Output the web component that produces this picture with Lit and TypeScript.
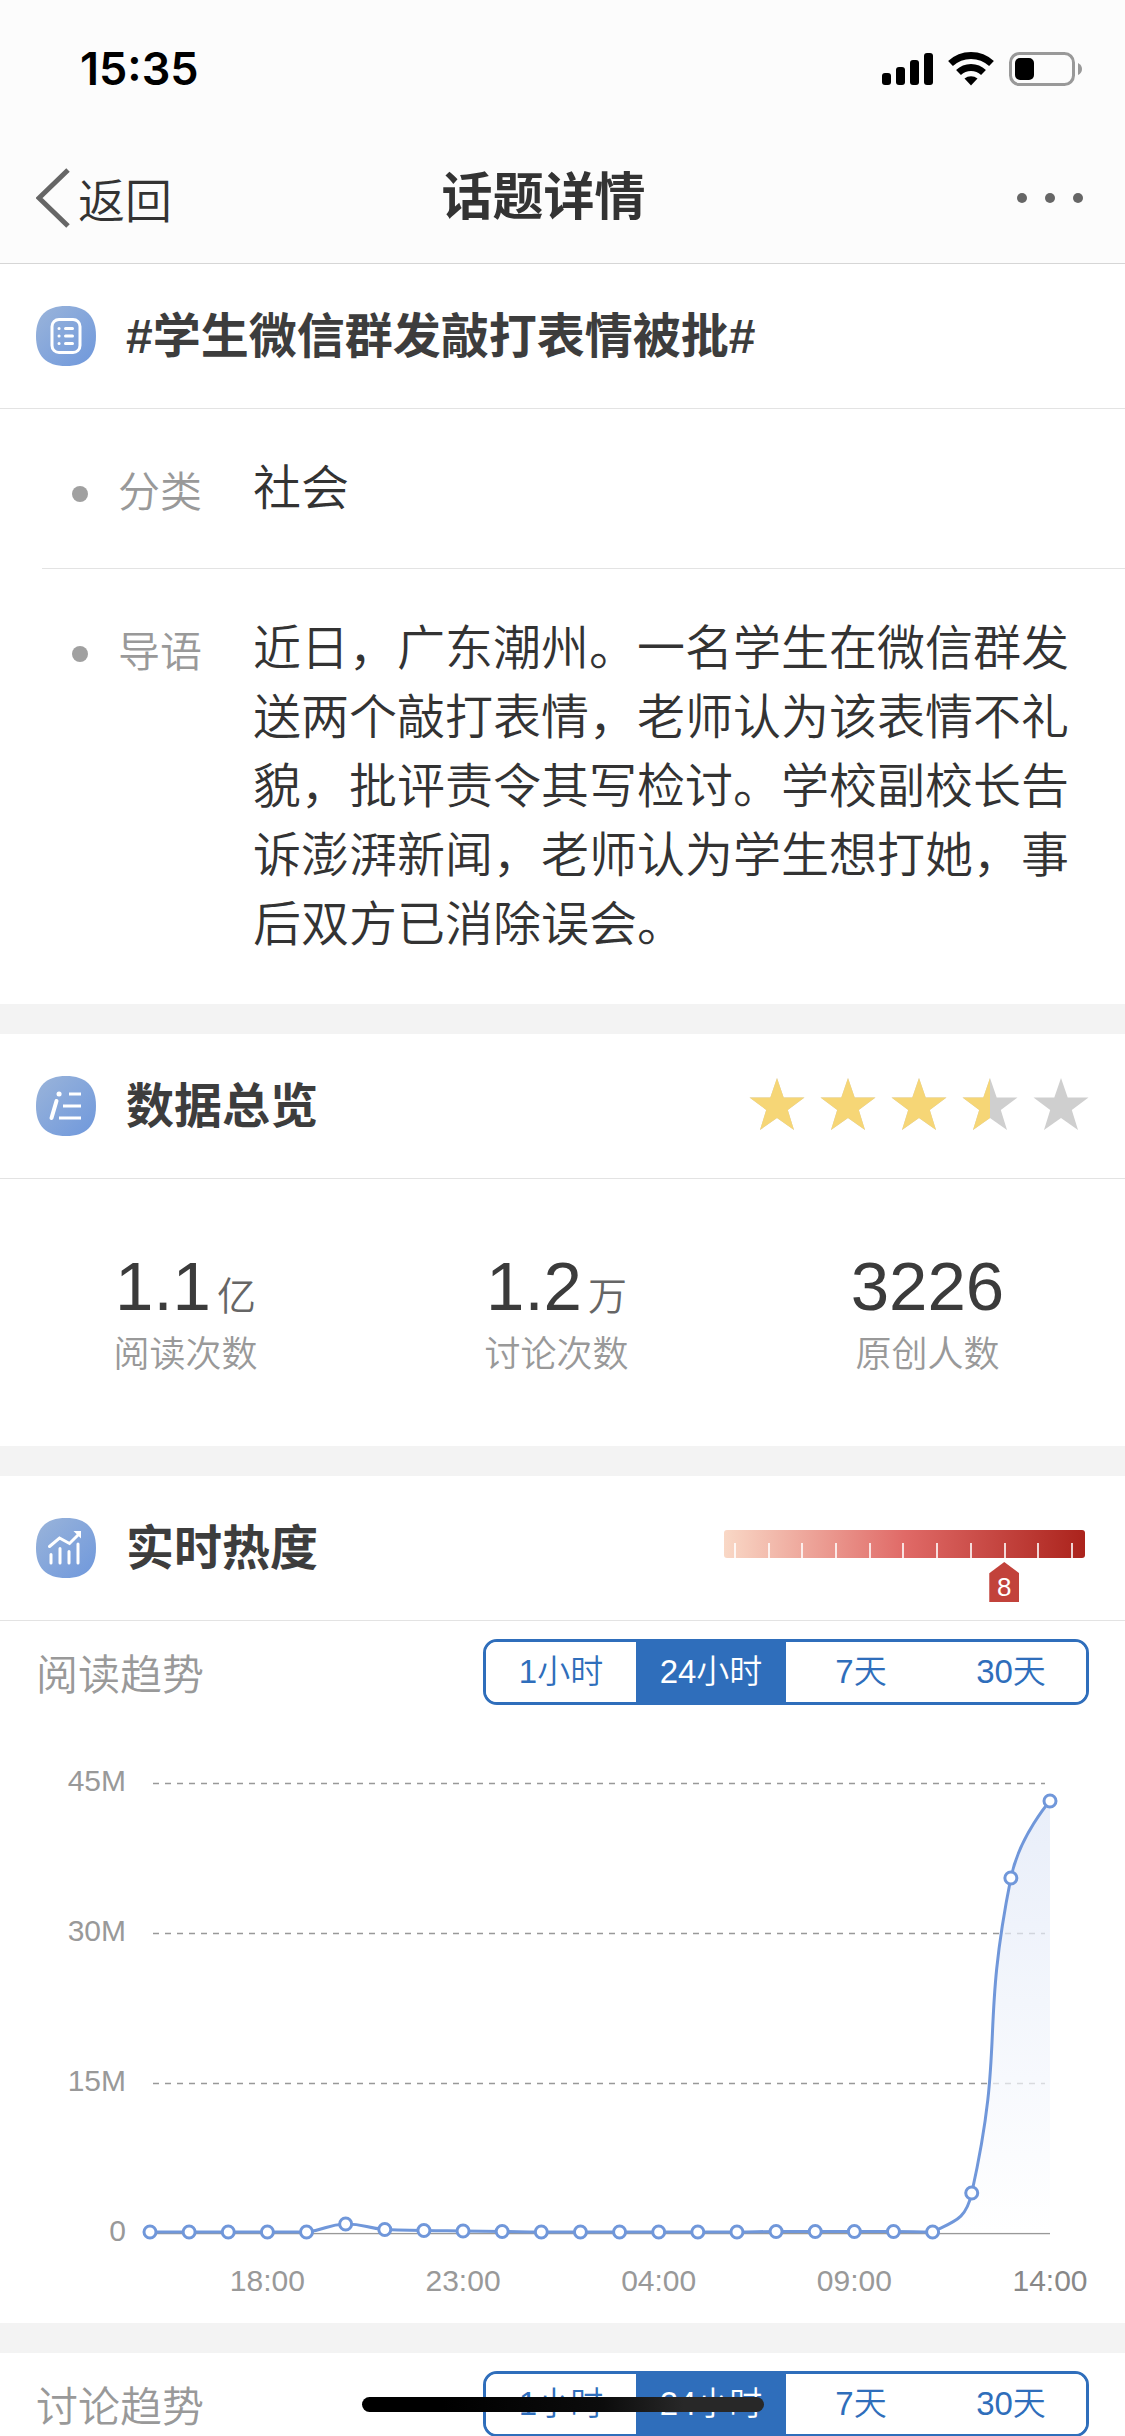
import { LitElement, html, svg, css } from "lit";
import { customElement, property, state } from "lit/decorators.js";

const FONT = css`"Liberation Sans", "Noto Sans CJK SC", sans-serif`;
const LABEL_FONT = css`"Noto Sans CJK SC", "Liberation Sans", sans-serif`;

@customElement("status-bar")
class StatusBar extends LitElement {
  static styles = css`
    :host { display: flex; align-items: center; justify-content: space-between; height: 132px; padding: 6px 43px 0 80px; box-sizing: border-box; }
    .time { font: 600 45px/52px Inter, sans-serif; color: #000; }
    .icons { display: block; width: 202px; height: 36px; }
  `;
  render() {
    return html`
      <span class="time">15:35</span>
      <svg class="icons" viewBox="0 0 202 36" role="img" aria-label="信号、无线网络、电量">
        <rect x="2" y="22" width="9" height="12" rx="3" />
        <rect x="16" y="16" width="9" height="18" rx="3" />
        <rect x="30" y="9" width="9" height="25" rx="3" />
        <rect x="44" y="2" width="9" height="32" rx="3" />
        <g fill="none" stroke="#000" stroke-width="7">
          <path d="M70.500 12.500a30 30 0 0 1 41 0" />
          <path d="M78.500 21.500a18 18 0 0 1 25 0" />
        </g>
        <path d="M84.500 27.500a10.500 10.500 0 0 1 13 0l-6.500 7z" />
        <rect x="130.500" y="2.500" width="63" height="31" rx="9" fill="none" stroke="#999" stroke-width="3" />
        <rect x="135" y="7" width="19" height="22" rx="5" />
        <path d="M198 12q4 2 4 6t-4 6z" fill="#999" />
      </svg>
    `;
  }
}

type IconName = "topic" | "overview" | "heat";

@customElement("section-icon")
class SectionIcon extends LitElement {
  @property() name: IconName = "topic";
  static styles = css`
    :host { display: block; width: 60px; height: 60px; flex: none; }
    .icon { display: block; width: 100%; height: 100%; }
  `;
  glyph() {
    if (this.name === "topic")
      return svg`
        <rect x="16" y="13.500" width="28" height="33" rx="7" stroke-width="3" />
        <path stroke-width="3" d="M23 22.500h.1M23 30h.1M23 37.500h.1M29.500 22.500h7M29.500 30h7M29.500 37.500h7" />`;
    if (this.name === "overview")
      return svg`
        <path stroke-width="5" d="M23 18h.1" />
        <path stroke-width="4" d="M20.500 25L15.500 42" />
        <path stroke-width="3" stroke-linecap="butt" d="M33 18h12M27 30h18M23 42h22" />`;
    return svg`
      <path stroke-width="3" d="M15 36.500v8.500M24 30.500v14.500M33 33.500v11.500M42 26v19" />
      <path stroke-width="3" stroke-linejoin="miter" d="M13.500 28.500L23.500 20L33.500 25.500L42 17" />
      <path fill="#fff" stroke="none" d="M37.500 13h7.500v7.500z" />`;
  }
  render() {
    return html`
      <svg class="icon" viewBox="0 0 60 60" aria-hidden="true">
        <defs>
          <linearGradient id="g" x1="0" y1="0" x2="1" y2="1">
            <stop offset="0" stop-color="#9ab4da" /><stop offset="1" stop-color="#6f98dc" />
          </linearGradient>
        </defs>
        <path fill="url(#g)" d="M30 0C50 0 60 10 60 30S50 60 30 60 0 50 0 30 10 0 30 0z" />
        <g fill="none" stroke="#fff" stroke-linecap="round" stroke-linejoin="round">${this.glyph()}</g>
      </svg>
    `;
  }
}

@customElement("section-head")
class SectionHead extends LitElement {
  @property() icon: IconName = "topic";
  @property() heading = "";
  static styles = css`
    :host { display: flex; align-items: center; gap: 30px; height: 144px; padding: 0 36px; border-bottom: 1px solid #e3e3e3; }
    .heading { flex: 1; margin: 0; font: 700 48px/69px ${FONT}; color: #3d3d3d; }
  `;
  render() {
    return html`
      <section-icon .name=${this.icon}></section-icon>
      <h2 class="heading">${this.heading}</h2>
      <slot></slot>
    `;
  }
}

@customElement("star-rating")
class StarRating extends LitElement {
  @property({ type: Number }) value = 0;
  static styles = css`
    :host { display: flex; gap: 15px; padding-bottom: 4px; }
    .star { display: block; width: 56px; height: 54px; }
  `;
  render() {
    const d = "M28 1l6.700 19.500h20.800l-16.700 12.400 6.200 20.100L28 41 11 53l6.200-20.100L.5 20.500h20.800z";
    return [0, 1, 2, 3, 4].map((i) => {
      const part = Math.max(0, Math.min(1, this.value - i));
      return html`
        <svg class="star" viewBox="0 0 56 54" aria-hidden="true">
          <clipPath id="c${i}"><rect width=${56 * part} height="54" /></clipPath>
          <path d=${d} fill="#cfcfcf" />
          <path d=${d} fill="#f6d676" clip-path="url(#c${i})" />
        </svg>`;
    });
  }
}

@customElement("heat-gauge")
class HeatGauge extends LitElement {
  @property({ type: Number }) value = 0;
  static styles = css`
    :host { display: block; position: relative; width: 361px; height: 28px; margin: 0 4px 8px 0; }
    .bar { display: flex; align-items: flex-end; justify-content: space-between; height: 28px; padding: 0 12px 0 10px; box-sizing: border-box; border-radius: 3px;
      background: linear-gradient(90deg, #f9d8c6, #e06a67 50%, #ab231c); }
    .tick { width: 2px; height: 15px; background: #fff; opacity: 0.8; }
    .marker { position: absolute; top: 32px; width: 30px; height: 40px; margin-left: -15px; padding-top: 12px; box-sizing: border-box; text-align: center;
      font: 26px/26px ${FONT}; color: #fff; background: #c2423b; clip-path: polygon(50% 0, 100% 28%, 100% 100%, 0 100%, 0 28%); }
  `;
  render() {
    return html`
      <div class="bar">${Array.from({ length: 11 }, () => html`<i class="tick"></i>`)}</div>
      <span class="marker" style="left:${3 + this.value * 9.33}%">${this.value}</span>
    `;
  }
}

@customElement("trend-head")
class TrendHead extends LitElement {
  @property() heading = "";
  @state() selected = 1;
  static styles = css`
    :host { display: flex; align-items: center; justify-content: space-between; padding: 18px 36px 0; }
    .heading { margin: 0; font: 350 42px/66px ${LABEL_FONT}; color: #999; }
    .tabs { display: flex; width: 606px; height: 66px; box-sizing: border-box; border: 3px solid #2f6ebb; border-radius: 14px; overflow: hidden; }
    .tab { flex: 1; padding: 0; border: 0; background: #fff; color: #2f6ebb; font: 350 33px/60px ${FONT}; }
    .tab.on { background: #2f6ebb; color: #fff; }
  `;
  render() {
    return html`
      <h3 class="heading">${this.heading}</h3>
      <div class="tabs" role="group" aria-label=${this.heading}>
        ${["1小时", "24小时", "7天", "30天"].map(
          (t, i) => html`<button class="tab ${i === this.selected ? "on" : ""}" aria-pressed=${i === this.selected} @click=${() => (this.selected = i)}>${t}</button>`
        )}
      </div>
    `;
  }
}

type Point = [number, number];
const BASE = 528;
const READS = [0.1, 0.1, 0.1, 0.1, 0.1, 0.9, 0.35, 0.25, 0.2, 0.15, 0.1, 0.1, 0.1, 0.1, 0.1, 0.1, 0.15, 0.15, 0.15, 0.15, 0.1, 4, 35.5, 43.2];

const clampTo = (p: Point, a: Point, b: Point): Point =>
  [0, 1].map((n) => Math.max(Math.min(a[n], b[n]), Math.min(Math.max(a[n], b[n]), p[n]))) as Point;

/** Smooth curve whose control points never leave the box of their own segment. */
function smoothPath(pts: Point[], smooth = 0.5): string {
  let out: Point = pts[0];
  let path = `M${pts[0]}`;
  for (let i = 1; i < pts.length; i++) {
    const prev = pts[i - 1], p = pts[i], next = pts[i + 1];
    let into: Point = p, after: Point = p;
    if (next) {
      const lenPrev = Math.hypot(p[0] - prev[0], p[1] - prev[1]);
      const lenNext = Math.hypot(next[0] - p[0], next[1] - p[1]);
      const vx = ((next[0] - prev[0]) * smooth) / (lenPrev + lenNext);
      const vy = ((next[1] - prev[1]) * smooth) / (lenPrev + lenNext);
      into = clampTo([p[0] - vx * lenPrev, p[1] - vy * lenPrev], prev, p);
      after = clampTo([p[0] + vx * lenNext, p[1] + vy * lenNext], p, next);
    }
    path += `C${out} ${into} ${p}`;
    out = after;
  }
  return path;
}

@customElement("trend-chart")
class TrendChart extends LitElement {
  static styles = css`
    :host { display: block; }
    .chart { display: block; width: 100%; }
    .label { font: 30px ${FONT}; fill: #999; }
    .last { fill: #888; }
  `;
  render() {
    const pts = READS.map((v, i): Point => [150 + (i * 900) / 23, BASE - v * 10]);
    const line = smoothPath(pts);
    return html`
      <svg class="chart" viewBox="0 0 1125 618" role="img" aria-label="阅读趋势">
        <defs>
          <linearGradient id="area" x1="0" y1="0" x2="0" y2="1">
            <stop offset="0" stop-color="#dfe7f7" /><stop offset="1" stop-color="#fff" />
          </linearGradient>
        </defs>
        ${[45, 30, 15].map((v) => svg`<path d="M153 ${BASE - v * 10 + 0.5}H1045" stroke="#999" stroke-width="1.400" stroke-dasharray="6 6" />`)}
        ${[45, 30, 15, 0].map((v) => svg`<text class="label" x="126" y=${BASE - v * 10 + 8} text-anchor="end">${v ? v + "M" : "0"}</text>`)}
        <path d="M150 ${BASE + 0.5}H1050" stroke="#999" stroke-width="1.600" />
        <path d="${line}V${BASE}H150z" fill="url(#area)" opacity="0.7" />
        <path d=${line} fill="none" stroke="#7097da" stroke-width="3" />
        ${pts.map((p) => svg`<circle cx=${p[0]} cy=${p[1]} r="6" fill="#fff" stroke="#7097da" stroke-width="3" />`)}
        ${["18:00", "23:00", "04:00", "09:00", "14:00"].map(
          (t, i) => svg`<text class="label ${i === 4 ? "last" : ""}" x=${pts[3 + i * 5][0]} y="586" text-anchor="middle">${t}</text>`
        )}
      </svg>
    `;
  }
}

@customElement("app-root")
class AppRoot extends LitElement {
  static styles = css`
    :host { display: flex; flex-direction: column; position: relative; height: 100vh; overflow: hidden; background: #f3f3f3; font-family: ${FONT}; font-weight: 350; color: #333; }
    .top { flex: none; background: #fcfcfc; border-bottom: 1px solid #d6d6d6; }
    .nav { display: grid; grid-template-columns: 1fr auto 1fr; align-items: center; height: 131px; padding: 0 36px; }
    .back { display: flex; align-items: center; gap: 8px; justify-self: start; padding: 0; border: 0; background: none; font: 350 47px/69px ${LABEL_FONT}; color: #333; }
    .chevron { display: block; width: 34px; height: 60px; }
    .title { margin: 0; padding-right: 38px; font: 700 51px/69px ${FONT}; }
    .more { display: block; justify-self: end; padding: 0; border: 0; background: none; }
    .dots { display: block; width: 72px; height: 12px; }
    .scroll { flex: 1; min-height: 0; overflow-y: auto; scrollbar-width: none; }
    .card { background: #fff; margin-bottom: 30px; }
    .facts { margin: 0; }
    .fact { display: flex; padding: 45px 56px 45px 30px; margin-left: 42px; line-height: 69px; }
    .fact + .fact { border-top: 1px solid #e3e3e3; }
    .bullet { flex: none; width: 16px; height: 16px; margin-top: 32px; border-radius: 50%; background: #a0a0a0; }
    .term { flex: none; width: 135px; margin-left: 30px; font-family: ${LABEL_FONT}; font-size: 42px; color: #999; }
    .detail { flex: 1; margin: 0; font-size: 48px; }
    .stats { display: grid; grid-template-columns: repeat(3, 1fr); padding: 66px 12px 66px 0; text-align: center; }
    .num { font-size: 69px; line-height: 84px; color: #3b3b3b; }
    .unit { margin-left: 6px; font-size: 39px; line-height: 39px; color: #666; }
    .cap { font-size: 36px; line-height: 51px; color: #999; }
    .home { position: absolute; left: 50%; bottom: 24px; width: 402px; height: 15px; margin-left: -201px; border-radius: 8px; background: linear-gradient(90deg, #000 20%, #0c0c0c 60%, #282828 80%); }
  `;
  render() {
    return html`
      <header class="top">
        <status-bar></status-bar>
        <nav class="nav">
          <button class="back">
            <svg class="chevron" viewBox="0 0 34 60" aria-hidden="true"><path d="M32 2L3 30L32 58" fill="none" stroke="#666" stroke-width="5" /></svg>
            返回
          </button>
          <h1 class="title">话题详情</h1>
          <button class="more" aria-label="更多">
            <svg class="dots" viewBox="0 0 72 12"><g fill="#666"><circle cx="5" cy="6" r="5" /><circle cx="33" cy="6" r="5" /><circle cx="61" cy="6" r="5" /></g></svg>
          </button>
        </nav>
      </header>
      <main class="scroll">
        <section class="card">
          <section-head icon="topic" heading="#学生微信群发敲打表情被批#"></section-head>
          <div class="facts">
            <div class="fact"><i class="bullet"></i><span class="term">分类</span><p class="detail">社会</p></div>
            <div class="fact"><i class="bullet"></i><span class="term">导语</span><p class="detail">近日，广东潮州。一名学生在微信群发送两个敲打表情，老师认为该表情不礼貌，批评责令其写检讨。学校副校长告诉澎湃新闻，老师认为学生想打她，事后双方已消除误会。</p></div>
          </div>
        </section>
        <section class="card">
          <section-head icon="overview" heading="数据总览"><star-rating value="3.5"></star-rating></section-head>
          <div class="stats">
            <div><div class="num">1.1<span class="unit">亿</span></div><div class="cap">阅读次数</div></div>
            <div><div class="num">1.2<span class="unit">万</span></div><div class="cap">讨论次数</div></div>
            <div><div class="num">3226</div><div class="cap">原创人数</div></div>
          </div>
        </section>
        <section class="card">
          <section-head icon="heat" heading="实时热度"><heat-gauge value="8"></heat-gauge></section-head>
          <trend-head heading="阅读趋势"></trend-head>
          <trend-chart></trend-chart>
        </section>
        <section class="card">
          <trend-head heading="讨论趋势"></trend-head>
        </section>
      </main>
      <div class="home"></div>
    `;
  }
}
